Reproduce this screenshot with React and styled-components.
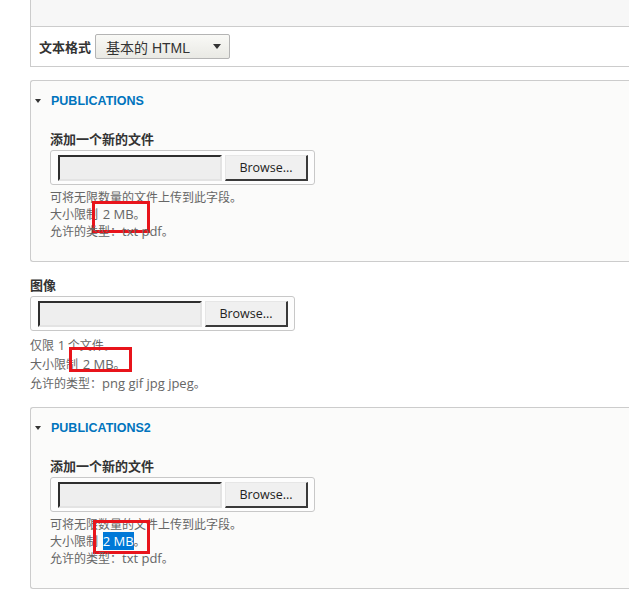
import React from "react";
import styled, { createGlobalStyle } from "styled-components";

const GlobalStyle = createGlobalStyle`
  html, body {
    margin: 0;
    padding: 0;
    background: #fff;
    overflow: hidden;
  }
  body {
    font-family: "Open Sans", "Noto Sans CJK SC", sans-serif;
    color: #333;
  }
`;

const Page = styled.div`
  width: 640px;
  padding-left: 30px;
  box-sizing: border-box;
`;

const EditorBox = styled.div`
  border-left: 1px solid #ccc;
  border-bottom: 1px solid #ccc;
`;

const EditorToolbar = styled.div`
  height: 26px;
  background: #f7f7f7;
  border-bottom: 1px solid #ccc;
`;

const FormatRow = styled.div`
  height: 39px;
  display: flex;
  align-items: center;
  gap: 4px;
  padding-left: 8px;
`;

const FormatLabel = styled.span`
  font-family: "Noto Sans CJK SC", sans-serif;
  font-weight: 700;
  font-size: 13px;
  color: #333;
`;

const Select = styled.div`
  width: 135px;
  height: 25px;
  box-sizing: border-box;
  border: 1px solid #b4b4b4;
  border-radius: 2px;
  background: linear-gradient(#f9f9f6, #e9e9e4);
  display: flex;
  align-items: center;
  justify-content: space-between;
  padding: 0 8px 0 10px;
  font-family: "Liberation Sans", "Noto Sans CJK SC", sans-serif;
  font-size: 14px;
  color: #333;
`;

const Caret = styled.span`
  width: 0;
  height: 0;
  border-left: ${(p) => p.$size}px solid transparent;
  border-right: ${(p) => p.$size}px solid transparent;
  border-top: ${(p) => p.$size + 1}px solid #333;
`;

const Fieldset = styled.section`
  margin-top: ${(p) => p.$gap}px;
  border: 1px solid #ccc;
  border-right: none;
  border-radius: 3px 0 0 3px;
  background: #fbfbfa;
  padding: 10px 0 22px 4px;
`;

const Legend = styled.div`
  display: flex;
  align-items: center;
  gap: 10px;
  height: 20px;
  font-family: "Liberation Sans", sans-serif;
  font-weight: 700;
  font-size: 12.5px;
  color: #0074bd;
`;

const FieldBody = styled.div`
  padding-left: 15px;
  padding-top: 19px;
`;

const FieldLabel = styled.div`
  font-family: "Noto Sans CJK SC", sans-serif;
  font-weight: 700;
  font-size: 13px;
  line-height: 18px;
  color: #333;
  margin-top: ${(p) => p.$top || 0}px;
`;

const FileBox = styled.div`
  margin-top: 2px;
  width: 265px;
  height: 35px;
  box-sizing: border-box;
  border: 1px solid #c8c8c8;
  border-radius: 3px;
  background: #fdfdfd;
  display: flex;
  align-items: center;
  gap: 3px;
  padding-left: 7px;
`;

const FileField = styled.div`
  width: 164px;
  height: 26px;
  box-sizing: border-box;
  background: #eeeeee;
  border-top: 2px solid #2e2e2e;
  border-left: 2px solid #2e2e2e;
  border-bottom: 2px solid #e3e3e3;
  border-right: 2px solid #e3e3e3;
`;

const BrowseButton = styled.button`
  width: 83px;
  height: 26px;
  box-sizing: border-box;
  padding: 0;
  background: #f0f0f0;
  border-top: 1px solid #e6e6e6;
  border-left: 1px solid #e6e6e6;
  border-bottom: 2px solid #3a3a3a;
  border-right: 2px solid #3a3a3a;
  font-family: "Open Sans", sans-serif;
  font-size: 12.5px;
  color: #222;
`;

const Line = styled.div`
  position: relative;
  white-space: nowrap;
`;

const Description = styled.div`
  margin-top: ${(p) => p.$top}px;
  font-family: "Noto Sans CJK SC", sans-serif;
  font-size: 12px;
  line-height: ${(p) => p.$line}px;
  color: #666;

  ${Line} {
    height: ${(p) => p.$line}px;
  }
`;

const Latin = styled.span`
  font-family: "Open Sans", sans-serif;
  font-size: 13px;
  line-height: 1;
  margin-left: ${(p) => p.$pad || 0}px;
  background: ${(p) => (p.$selected ? "#0078d7" : "transparent")};
  color: ${(p) => (p.$selected ? "#fff" : "inherit")};
`;

const Marker = styled.span`
  position: absolute;
  box-sizing: border-box;
  border: 3px solid #e8141b;
  pointer-events: none;
`;

const FileInput = () => (
  <FileBox>
    <FileField />
    <BrowseButton>Browse...</BrowseButton>
  </FileBox>
);

const SizeLine = ({ box, selected }) => (
  <Line>
    大小限制 <Latin $pad={2} $selected={selected}>2 MB</Latin>。
    <Marker
      style={{ left: box.left, top: box.top, width: box.width, height: box.height }}
    />
  </Line>
);

const Publications = ({ title, gap, box, selected }) => (
  <Fieldset $gap={gap}>
    <Legend>
      <Caret $size={3} />
      {title}
    </Legend>
    <FieldBody>
      <FieldLabel>添加一个新的文件</FieldLabel>
      <FileInput />
      <Description $top={3} $line={17}>
        <Line>可将无限数量的文件上传到此字段。</Line>
        <SizeLine box={box} selected={selected} />
        <Line>
          允许的类型：<Latin>txt pdf</Latin>。
        </Line>
      </Description>
    </FieldBody>
  </Fieldset>
);

export default function App() {
  return (
    <>
      <GlobalStyle />
      <Page>
        <EditorBox>
          <EditorToolbar />
          <FormatRow>
            <FormatLabel>文本格式</FormatLabel>
            <Select>
              基本的 HTML
              <Caret $size={4} />
            </Select>
          </FormatRow>
        </EditorBox>

        <Publications
          title="PUBLICATIONS"
          gap={13}
          box={{ left: 42, top: -4, width: 58, height: 32 }}
        />

        <FieldLabel $top={14}>图像</FieldLabel>
        <FileInput />
        <Description $top={4} $line={19}>
          <Line>
            仅限 <Latin $pad={1}>1</Latin> 个文件。
          </Line>
          <SizeLine box={{ left: 39, top: -7, width: 63, height: 25 }} />
          <Line>
            允许的类型：<Latin>png gif jpg jpeg</Latin>。
          </Line>
        </Description>

        <Publications
          title="PUBLICATIONS2"
          gap={15}
          box={{ left: 43, top: -12, width: 57, height: 34 }}
          selected
        />
      </Page>
    </>
  );
}
